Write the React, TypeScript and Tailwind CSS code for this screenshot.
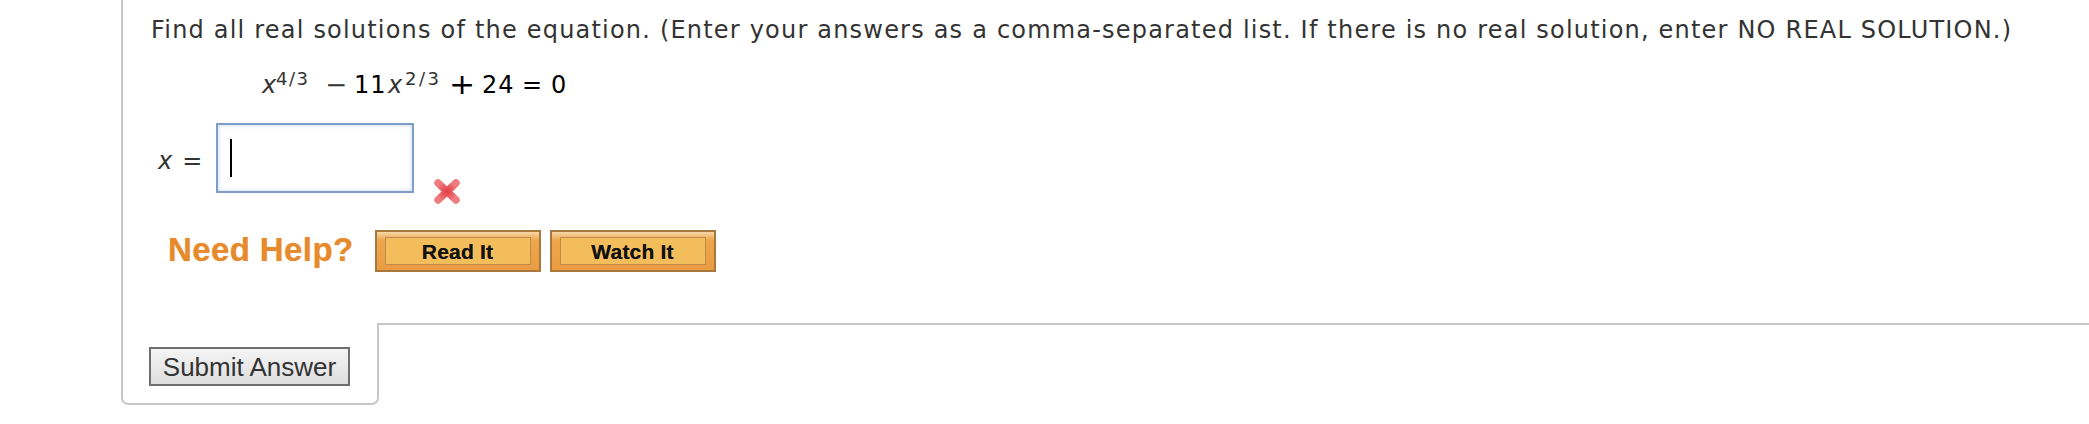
import React from "react";

const verdana = { fontFamily: '"DejaVu Sans", Verdana, sans-serif' };
const arial = { fontFamily: '"Liberation Sans", Arial, sans-serif' };

function HelpButton({ label }: { label: string }) {
  return (
    <div className="w-[166px] h-[42px] border-2 border-[#a8783e] bg-[linear-gradient(to_bottom,#f6d7a8_0%,#eda64c_22%,#ea9c41_100%)] px-[8px] py-[5px] flex">
      <div
        className="flex-1 border-[1.5px] border-[#bf8c4c] bg-[#f3bd5c] flex items-center justify-center text-[21px] font-bold text-[#111111] leading-none tracking-[0.2px] [text-shadow:0_0_0.6px_rgba(0,0,0,0.7)]"
        style={arial}
      >
        {label}
      </div>
    </div>
  );
}

function RedX() {
  return (
    <svg width="28" height="27" viewBox="0 0 28 27">
      <defs>
        <radialGradient id="rx" cx="50%" cy="50%" r="60%">
          <stop offset="0%" stopColor="#e03c43" />
          <stop offset="100%" stopColor="#ef7c7e" />
        </radialGradient>
      </defs>
      <path
        d="M5 5 L23 22 M23 5 L5 22"
        stroke="url(#rx)"
        strokeWidth="7.5"
        strokeLinecap="round"
        fill="none"
      />
    </svg>
  );
}

export default function App() {
  return (
    <div className="w-[2089px] h-[424px] bg-white overflow-hidden">
      <div className="ml-[121px]">
        <div className="h-[323px] border-l-2 border-[#c8c8c8] pl-[28px] pt-[16px]">
          <p
            className="text-[24px] leading-[28px] text-[#333333] whitespace-nowrap tracking-[1.2px]"
            style={verdana}
          >
            Find all real solutions of the equation. (Enter your answers as a
            comma-separated list. If there is no real solution, enter NO REAL
            SOLUTION.)
          </p>

          <div
            className="mt-[27px] ml-[111px] h-[28px] flex items-baseline text-[24px] leading-[28px] text-[#333333] whitespace-nowrap"
            style={verdana}
          >
            <span className="inline-block w-[14px] italic">x</span>
            <span className="inline-block w-[40px] relative top-[-8px] text-[18px] leading-[20px] tracking-[1.5px]">
              4/3
            </span>
            <span className="inline-block ml-[10px] w-[20px] text-center scale-x-[1.1]">
              −
            </span>
            <span className="inline-block ml-[8px] w-[31px] text-black tracking-[1px]">
              11
            </span>
            <span className="inline-block ml-[3px] w-[17px] italic">x</span>
            <span className="inline-block w-[40px] relative top-[-8px] text-[18px] leading-[20px] tracking-[2.5px]">
              2/3
            </span>
            <span className="inline-block ml-[7px] w-[20px] text-center text-black scale-x-[1.3] scale-y-[1.15]">
              +
            </span>
            <span className="inline-block ml-[10px] w-[31px] text-black tracking-[1px]">
              24
            </span>
            <span className="inline-block ml-[9px] w-[20px] text-center text-black">
              =
            </span>
            <span className="inline-block ml-[9px] w-[16px] text-black">
              0
            </span>
          </div>

          <div className="mt-[24px] flex items-start">
            <div
              className="mt-[24px] ml-[7px] text-[24px] leading-[28px] text-[#333333] whitespace-nowrap tracking-[1.2px]"
              style={verdana}
            >
              <i>x</i> =
            </div>
            <div className="ml-[12px] w-[198px] h-[70px] border-2 border-[#7e9ec7] bg-white shadow-[inset_0_0_4px_rgba(120,160,210,0.45)] pl-[12px] pt-[14px]">
              <div className="w-[2px] h-[38px] bg-black" />
            </div>
            <div className="ml-[19px] mt-[55px]">
              <RedX />
            </div>
          </div>

          <div className="mt-[25px] ml-[17px] flex items-start">
            <div
              className="mt-[1px] text-[33px] leading-[37px] font-bold text-[#e68a2d] whitespace-nowrap tracking-[0.4px] [text-shadow:0_0_1px_rgba(230,138,45,0.6)]"
              style={arial}
            >
              Need Help?
            </div>
            <div className="ml-[21px] flex gap-[9px]">
              <HelpButton label="Read It" />
              <HelpButton label="Watch It" />
            </div>
          </div>
        </div>

        <div className="flex">
          <div className="w-[258px] h-[82px] border-l-2 border-r-2 border-b-2 border-[#c8c8c8] rounded-b-[7px] pl-[26px] pt-[24px]">
            <button
              className="w-[201px] h-[39px] border-2 border-[#6e6e6e] bg-[linear-gradient(to_bottom,#f4f4f4,#dedede)] text-[26px] leading-none text-[#333333] flex items-center justify-center whitespace-nowrap"
              style={arial}
            >
              Submit Answer
            </button>
          </div>
          <div className="flex-1 -ml-[2px] h-[2px] bg-[#c8c8c8]" />
        </div>
      </div>
    </div>
  );
}
